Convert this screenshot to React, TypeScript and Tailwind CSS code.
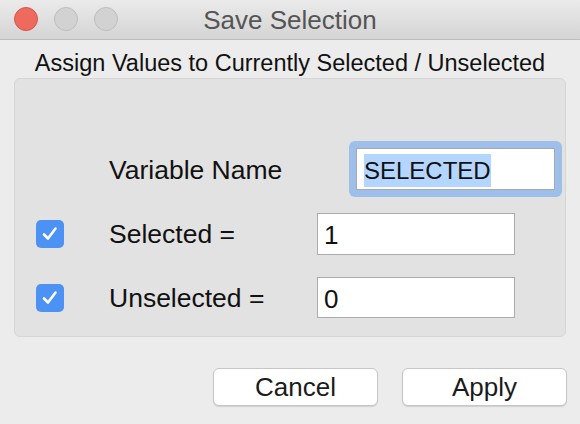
import type { ReactNode } from "react";

// Save Selection dialog - macOS style sheet

const font = "font-['Liberation_Sans','Helvetica_Neue',Arial,sans-serif]";

function Light({ color }: { color: "red" | "gray" }) {
  const styles = {
    red: "bg-[#ee6a5f] border-[#d5554b]",
    gray: "bg-[#d2d2d2] border-[#bdbdbd]",
  };
  return <span className={`block w-[24px] h-[24px] rounded-full border ${styles[color]}`} />;
}

function Checkbox() {
  return (
    <span className="flex items-center justify-center w-[28px] h-[28px] rounded-[5px] bg-[#4b92f4]">
      <svg width="20" height="20" viewBox="0 0 20 20" fill="none">
        <path d="M4 10.5 L8 14.5 L15.5 4.5" stroke="white" strokeWidth="2.6" strokeLinecap="round" strokeLinejoin="round" />
      </svg>
    </span>
  );
}

function Field({ children }: { children: ReactNode }) {
  return (
    <div className="flex items-center w-[198px] h-full bg-white border border-[#acacac] pl-[6px] pt-[2px] text-[26px] text-[#111]">
      {children}
    </div>
  );
}

function Button({ children }: { children: ReactNode }) {
  return (
    <button className="w-[165px] h-[38px] rounded-[6px] bg-white border border-[#c6c6c6] shadow-[0_1px_1px_rgba(0,0,0,0.12)] text-[26px] text-[#1b1b1b] leading-none">
      {children}
    </button>
  );
}

export default function App() {
  return (
    <div className={`w-[580px] h-[424px] bg-[#ececec] flex flex-col overflow-hidden ${font}`}>
      {/* Title bar */}
      <div className="h-[40px] shrink-0 grid grid-cols-[1fr_auto_1fr] items-center border-b border-[#bdbdbd] bg-gradient-to-b from-[#ebebeb] to-[#d4d4d4]">
        <div className="flex items-center gap-[16px] pl-[14px] pb-[1px]">
          <Light color="red" />
          <Light color="gray" />
          <Light color="gray" />
        </div>
        <span className="text-[26px] text-[#555] leading-none">Save Selection</span>
        <div />
      </div>

      {/* Subtitle */}
      <div className="h-[38px] pt-[10px] flex items-center justify-center">
        <span className="text-[23.5px] text-[#111] leading-none">
          Assign Values to Currently Selected / Unselected
        </span>
      </div>

      {/* Group box */}
      <div className="mx-[14px] h-[259px] rounded-[6px] bg-[#e2e2e2] border border-[#d6d6d6] pt-[62px] text-[26.5px] text-[#111] leading-none">
        <div className="flex items-center h-[56px]">
          <div className="w-[94px]" />
          <span className="w-[240px] pt-[3px]">Variable Name</span>
          <div className="w-[213px] h-full rounded-[6px] bg-[#9dbfea] p-[7px]">
            <div className="flex items-center h-full bg-white border border-[#a9a9a9] pl-[7px] pt-[3px]">
              <span className="inline-flex items-center h-[33px] bg-[#b4d6fe] text-[24px]">SELECTED</span>
            </div>
          </div>
        </div>

        <div className="flex items-center h-[42px] mt-[16px]">
          <div className="w-[94px] pl-[21px]">
            <Checkbox />
          </div>
          <span className="w-[208px] pt-[1px]">Selected =</span>
          <Field>1</Field>
        </div>

        <div className="flex items-center h-[41px] mt-[22px]">
          <div className="w-[94px] pl-[21px]">
            <Checkbox />
          </div>
          <span className="w-[208px] pt-[1px]">Unselected =</span>
          <Field>0</Field>
        </div>
      </div>

      {/* Buttons */}
      <div className="flex justify-end gap-[24px] mt-[31px] pr-[13px]">
        <Button>Cancel</Button>
        <Button>Apply</Button>
      </div>
    </div>
  );
}
